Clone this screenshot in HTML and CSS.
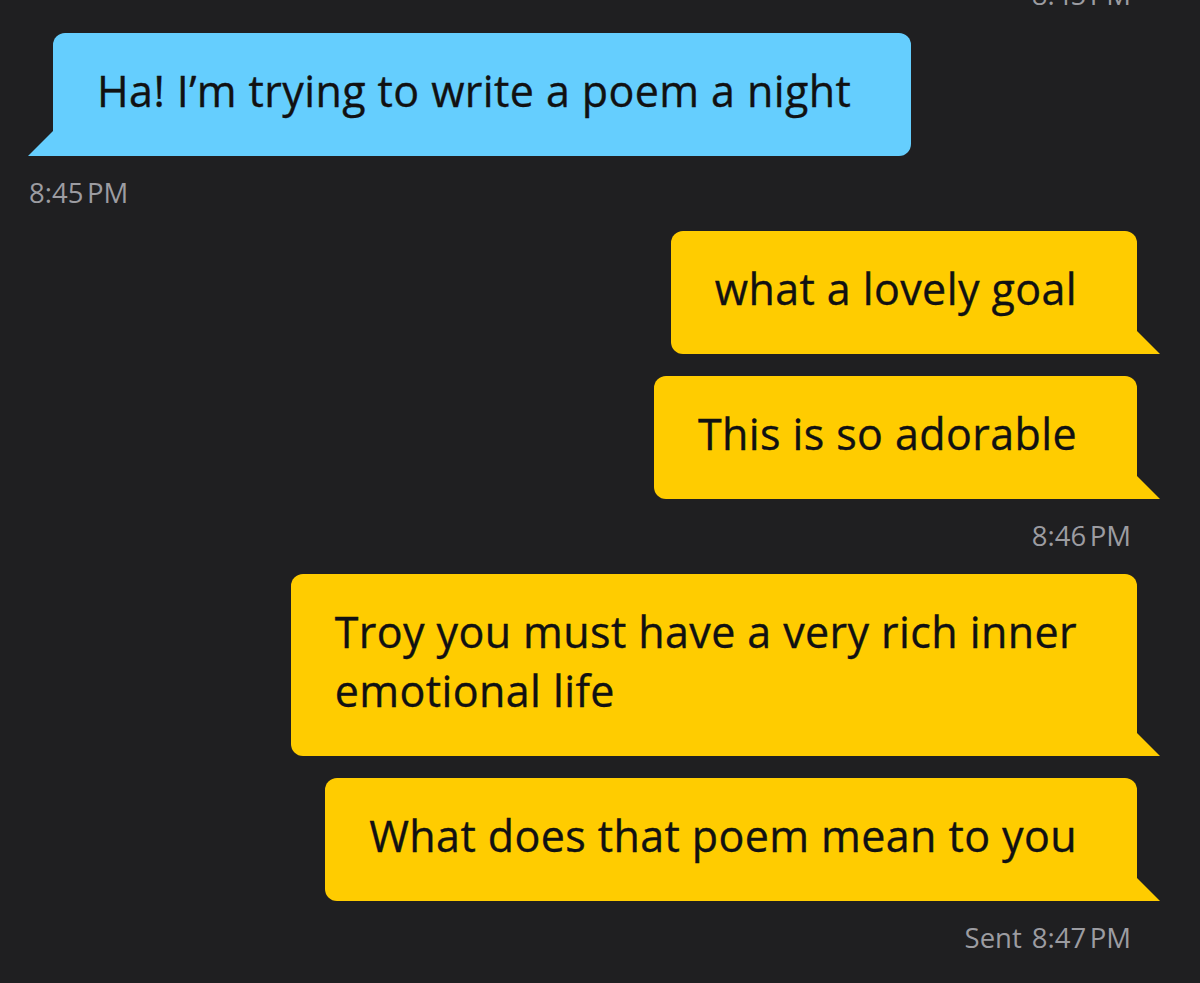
FILE: index.html
```html
<!DOCTYPE html>
<html lang="en">
<head>
<meta charset="utf-8">
<title>Chat</title>
<link rel="stylesheet" href="styles.css">
</head>
<body>
<div class="chat">
  <div class="ts ts-out ts-top">8:45&#8239;PM</div>

  <div class="bubble in">Ha! I’m trying to write a poem a night</div>
  <div class="ts ts-in">8:45&#8239;PM</div>

  <div class="group">
    <div class="bubble out">what a lovely goal</div>
    <div class="bubble out">This is so adorable</div>
  </div>
  <div class="ts ts-out">8:46&#8239;PM</div>

  <div class="group">
    <div class="bubble out">Troy you must have a very rich inner<br>emotional life</div>
    <div class="bubble out">What does that poem mean to you</div>
  </div>
  <div class="ts ts-out"><span class="sent">Sent</span>8:47&#8239;PM</div>
</div>
</body>
</html>
```

FILE: styles.css
```css
* { box-sizing: border-box; }

html, body {
  margin: 0;
  padding: 0;
  background: #1f1f21;
  height: 100%;
  overflow: hidden;
}

.chat {
  display: flex;
  flex-direction: column;
  padding: 0 63px 0 53px;
  font-family: "Open Sans", "Noto Sans", sans-serif;
}

.group {
  display: flex;
  flex-direction: column;
  align-items: flex-end;
  gap: 22px;
}

.bubble {
  position: relative;
  font-size: 43px;
  font-weight: 500;
  letter-spacing: 0.4px;
  line-height: 59px;
  color: #111112;
  -webkit-text-stroke: 0.35px #111112;
  padding: 28px 60px 36px 44px;
  border-radius: 12px;
  white-space: nowrap;
}

.bubble.in {
  align-self: flex-start;
  background: #65cefe;
  border-bottom-left-radius: 0;
}

.bubble.in::after {
  content: "";
  position: absolute;
  left: -25px;
  bottom: 0;
  width: 25px;
  height: 25px;
  background: #65cefe;
  clip-path: polygon(100% 0, 100% 100%, 0 100%);
}

.bubble.out {
  background: #ffcc00;
  border-bottom-right-radius: 0;
}

.bubble.out::after {
  content: "";
  position: absolute;
  right: -23px;
  bottom: 0;
  width: 23px;
  height: 23px;
  background: #ffcc00;
  clip-path: polygon(0 0, 100% 100%, 0 100%);
}

.ts {
  font-size: 27.5px;
  line-height: 32px;
  color: #9c9ca1;
  margin: 21px 0 22px;
  white-space: nowrap;
}

.ts-in {
  align-self: flex-start;
  margin-left: -24px;
}

.ts-out {
  align-self: flex-end;
  margin-right: 6px;
}

.ts-top {
  margin-top: -21px;
}

.sent {
  margin-right: 10px;
}
```
